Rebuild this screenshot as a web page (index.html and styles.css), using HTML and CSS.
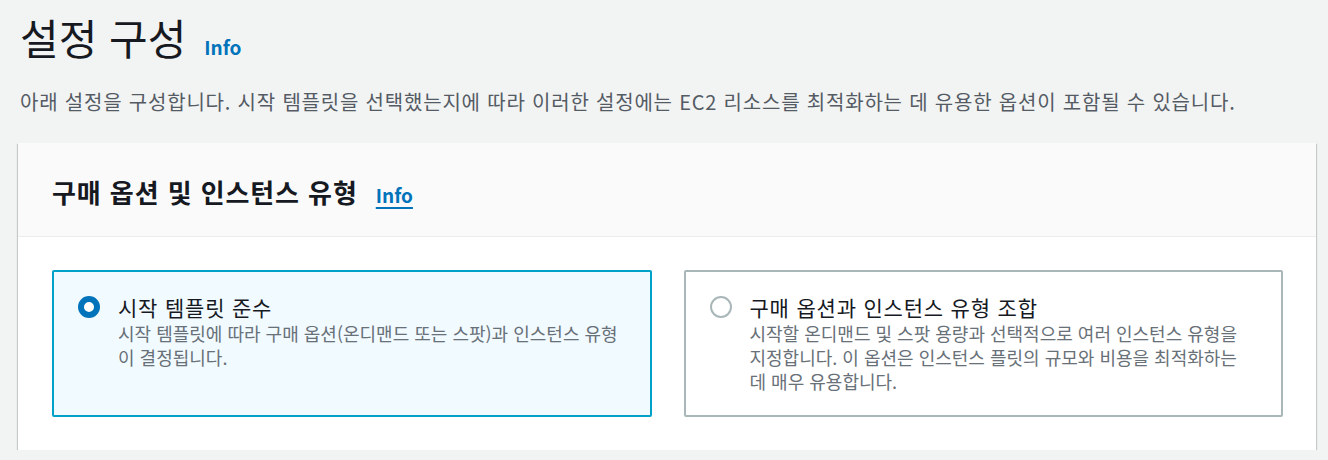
FILE: index.html
```html
<!DOCTYPE html>
<html lang="ko">
<head>
<meta charset="utf-8">
<link rel="stylesheet" href="styles.css">
</head>
<body>
<div class="page">
  <div class="page-head">
    <h1 class="page-title">설정 구성</h1>
    <a class="info" href="#">Info</a>
  </div>
  <p class="page-desc">아래 설정을 구성합니다. 시작 템플릿을 선택했는지에 따라 이러한 설정에는 EC2 리소스를 최적화하는 데 유용한 옵션이 포함될 수 있습니다.</p>

  <section class="card">
    <div class="card-head">
      <h2 class="card-title">구매 옵션 및 인스턴스 유형</h2>
      <a class="info info-ul" href="#">Info</a>
    </div>
    <div class="card-body">
      <div class="tiles">
        <label class="tile selected">
          <span class="radio on"></span>
          <span class="tile-text">
            <span class="tile-title">시작 템플릿 준수</span>
            <span class="tile-desc">시작 템플릿에 따라 구매 옵션(온디맨드 또는 스팟)과 인스턴스 유형이 결정됩니다.</span>
          </span>
        </label>
        <label class="tile">
          <span class="radio"></span>
          <span class="tile-text">
            <span class="tile-title">구매 옵션과 인스턴스 유형 조합</span>
            <span class="tile-desc">시작할 온디맨드 및 스팟 용량과 선택적으로 여러 인스턴스 유형을 지정합니다. 이 옵션은 인스턴스 플릿의 규모와 비용을 최적화하는 데 매우 유용합니다.</span>
          </span>
        </label>
      </div>
    </div>
  </section>
</div>
</body>
</html>
```

FILE: styles.css
```css
html, body {
  margin: 0;
  padding: 0;
  background: #f2f3f3;
}
body {
  font-family: "Noto Sans CJK KR", "Noto Sans", sans-serif;
  color: #16191f;
}
.page {
  padding: 0 12px 0 18px;
}
.page-head {
  display: flex;
  align-items: baseline;
  gap: 18px;
  padding: 11px 0 0 2px;
  height: 55px;
}
.page-title {
  margin: 0;
  font-size: 42px;
  font-weight: 400;
  line-height: 52px;
  color: #16191f;
}
.info {
  color: #0073bb;
  font-weight: 700;
  font-size: 19px;
  text-decoration: none;
}
.page-desc {
  margin: 22px 0 0 2px;
  font-size: 20px;
  letter-spacing: 0.8px;
  line-height: 28px;
  color: #545b64;
}
.card {
  margin-top: 27px;
  background: #fff;
  box-shadow: 0 1px 1px 0 rgba(0,28,36,.3), 1px 1px 1px 0 rgba(0,28,36,.15), -1px 1px 1px 0 rgba(0,28,36,.15);
  width: 1298px;
}
.card-head {
  display: flex;
  align-items: baseline;
  gap: 18px;
  background: #fafafa;
  border-bottom: 1px solid #eaeded;
  height: 94px;
  box-sizing: border-box;
  padding: 31px 34px 0;
}
.card-title {
  margin: 0;
  font-size: 26px;
  letter-spacing: 0.9px;
  font-weight: 700;
  line-height: 36px;
  color: #16191f;
}
.info-ul {
  text-decoration: underline;
  text-underline-offset: 4px;
  text-decoration-thickness: 2px;
}
.card-body {
  padding: 33px 33px 33px 34px;
}
.tiles {
  display: flex;
  gap: 32px;
}
.tile {
  width: 600px;
  height: 147px;
  box-sizing: border-box;
  border: 2px solid #aab7b8;
  border-radius: 2px;
  display: flex;
  gap: 18px;
  padding: 21px 24px;
  background: #fff;
}
.tile.selected {
  border-color: #00a1c9;
  background: #f1faff;
}
.radio {
  flex: none;
  width: 22px;
  height: 22px;
  box-sizing: border-box;
  border: 2px solid #aab7b8;
  border-radius: 50%;
  margin-top: 3px;
  background: #fff;
}
.radio.on {
  border: 6px solid #0073bb;
}
.tile-text {
  display: flex;
  flex-direction: column;
  width: 504px;
}
.tile-title {
  font-size: 21px;
  letter-spacing: 0.8px;
  line-height: 28px;
  color: #16191f;
}
.tile-desc {
  font-size: 18px;
  line-height: 24px;
  color: #687078;
}
```
